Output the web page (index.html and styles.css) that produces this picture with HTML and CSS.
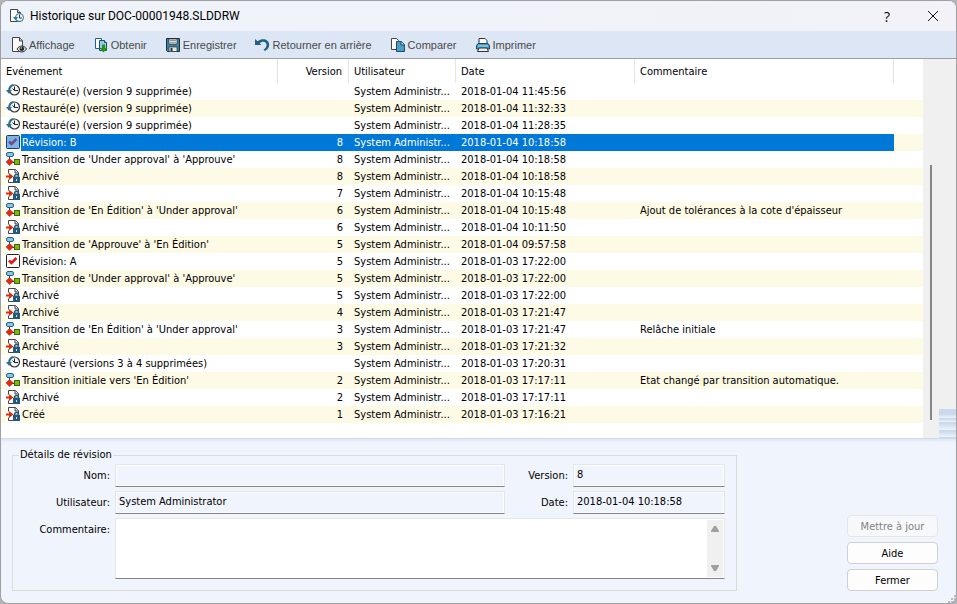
FILE: index.html
```html
<!DOCTYPE html>
<html lang="fr">
<head>
    <meta charset="UTF-8">
    <meta name="viewport" content="width=device-width, initial-scale=1.0">
    <title>Historique sur DOC-00001948.SLDDRW</title>
    <link rel="stylesheet" href="styles.css">
</head>
<body>

    <!-- shared icons -->
    <svg class="sprite" aria-hidden="true">
        <symbol id="restore" viewBox="0 0 15 16">
            <circle cx="8.500" cy="7" r="5" fill="#f4f8fa" stroke="#333" stroke-width="1.2"/>
            <path d="M8.500 3.500v4H12M8.500 7.500l-2-2" fill="none" stroke="#222"/>
            <path d="M7.500 1.800C4.500 2.500 3 4.500 3 7.500" fill="none" stroke="#2c6f94" stroke-width="1.800"/>
            <path d="M0 7h6l-3 4z" fill="#2c6f94"/>
        </symbol>
        <symbol id="revision" viewBox="0 0 15 16">
            <rect x=".5" y="1.500" width="13" height="13" rx="1" fill="#fff" stroke="#222"/>
            <path d="M3 7.500l2.500 2.500L10.500 5" fill="none" stroke="#e8141f" stroke-width="2.500"/>
        </symbol>
        <symbol id="revision-on" viewBox="0 0 15 16">
            <rect x=".5" y="1.500" width="13" height="13" rx="1" fill="#7cb4e8" stroke="#123f6d"/>
            <path d="M3 7.500l2.500 2.500L10.500 5" fill="none" stroke="#704c86" stroke-width="2.500"/>
        </symbol>
        <symbol id="transition" viewBox="0 0 15 16">
            <path d="M3.500 5v6.500H9" fill="none" stroke="#333"/>
            <rect x=".5" y="1.500" width="7" height="4" rx="1.500" fill="#80c9ef" stroke="#28627c"/>
            <path d="M3.500 7.500L7.500 11 3.500 14.500 0 11z" fill="#e8280e" stroke="#8c2412" stroke-width=".5"/>
            <rect x="8.500" y="8.500" width="5" height="5" fill="#7dbb00" stroke="#3e6510"/>
        </symbol>
        <symbol id="archive" viewBox="0 0 15 16">
            <path d="M2.500 5.500v-4h7l3 3V9H8v5.500H2.500v-3" fill="#fff" stroke="#444"/>
            <path d="M9 1.500V5h3.500" fill="#ddd" stroke="#444"/>
            <path d="M0 7.500h3V5l4.500 3.500L3 12V9.500H0z" fill="#e02b08"/>
            <path d="M8.500 10V8.500a2 2 0 0 1 4 0V10" fill="none" stroke="#235a7c" stroke-width="1.500"/>
            <rect x="7" y="9" width="7" height="6" fill="#235a7c"/>
            <path d="M10.500 11v2" stroke="#cfe0ea"/>
        </symbol>
    </svg>

    <div class="window">
        <header class="titlebar">
            <svg class="icon" viewBox="0 0 16 16">
                <path d="M1.500 1.500h7l3 3v9h-10z" fill="#fff" stroke="#444"/>
                <path d="M8.500 1.500v3h3" fill="#ddd" stroke="#444"/>
                <circle cx="10.500" cy="9.500" r="4" fill="#eef5f9" stroke="#2f7398"/>
                <path d="M10.500 6.500v3.500H13" fill="none" stroke="#333"/>
                <path d="M4 9h5l-2.500 3.500z" fill="#247ba8"/>
            </svg>
            <h1>Historique sur DOC-00001948.SLDDRW</h1>
            <button class="caption" aria-label="Aide">?</button>
            <button class="caption" aria-label="Fermer">
                <svg class="close" viewBox="0 0 12 12"><path d="M1 1l10 10M11 1L1 11" stroke="#111"/></svg>
            </button>
        </header>

        <nav class="toolbar">
            <button>
                <svg class="icon" viewBox="0 0 16 16">
                    <path d="M1.500.5h7l3 3v11h-10z" fill="#fafafa" stroke="#444"/>
                    <path d="M8.500.5V4h3" fill="#ccc" stroke="#444"/>
                    <path d="M6 12c2.500-4 7-4 9.500 0-2.500 4-7 4-9.500 0z" fill="#ddd" stroke="#333"/>
                    <circle cx="10.800" cy="11.700" r="2.300" fill="#222"/>
                    <circle cx="10.300" cy="11" r=".8" fill="#ddd"/>
                </svg>
                Affichage
            </button>
            <button>
                <svg class="icon" viewBox="0 0 16 16">
                    <path d="M2.500 1.500h6v10h-6z" fill="#fff" stroke="#245f7d"/>
                    <path d="M6.500 3.500h5l2 2v8h-7z" fill="#93cae4" stroke="#174f6d"/>
                    <path d="M11.500 3.500v2h2" fill="#fff" stroke="#174f6d"/>
                    <path d="M9 7.500h3V11h2.500l-4 4.500-4-4.500H9z" fill="#269318"/>
                </svg>
                Obtenir
            </button>
            <button>
                <svg class="icon" viewBox="0 0 16 16">
                    <path d="M1.500 1.500h13v13h-12l-1-1z" fill="#397f9f" stroke="#17303d"/>
                    <path d="M4 2h8v5H4z" fill="#f2f2f2" stroke="#333" stroke-width=".7"/>
                    <path d="M5 3.500h6M5 5.300h6" stroke="#777" stroke-width=".8"/>
                    <path d="M4 10h8v4.500H4z" fill="#e7e7e7" stroke="#333" stroke-width=".7"/>
                    <path d="M5.500 11h2v3h-2z" fill="#333"/>
                </svg>
                Enregistrer
            </button>
            <button>
                <svg class="icon" viewBox="0 0 16 16">
                    <path d="M0 2v6h6.500L4.600 6.200C7 3.800 11.500 4 11.500 8c0 2-1.200 3.600-3 4.800l1.500 1.200c2.500-1.300 4.200-3.500 4.200-6.200C14.200 2 7 .5 2.600 4.200z" fill="#235e83"/>
                </svg>
                Retourner en arrière
            </button>
            <button>
                <svg class="icon" viewBox="0 0 16 16">
                    <path d="M1.500 1.500h5l2 2v9h-7z" fill="#fff" stroke="#444"/>
                    <path d="M6.500 4.500h5l3 3v7h-8z" fill="#4f9fc5" stroke="#174f6d"/>
                    <path d="M11 4.500V8h3.500" fill="#b8dceb" stroke="#174f6d"/>
                </svg>
                Comparer
            </button>
            <button>
                <svg class="icon" viewBox="0 0 16 16">
                    <path d="M4 7V1.500h6l2 2V7" fill="#fff" stroke="#333"/>
                    <path d="M3 6.500h10l1.500 2V12h-13V8.500z" fill="#419ac0" stroke="#174b64"/>
                    <path d="M3 9h10" stroke="#b9e4f4"/>
                    <path d="M4 11h8l1.500 3.500h-11z" fill="#eee" stroke="#333"/>
                </svg>
                Imprimer
            </button>
        </nav>

        <main class="history">
            <div class="list">
                <table>
                    <colgroup>
                        <col class="col-event">
                        <col class="col-version">
                        <col class="col-user">
                        <col class="col-date">
                        <col class="col-comment">
                        <col>
                    </colgroup>
                    <thead>
                        <tr><th>Evénement</th><th class="num">Version</th><th>Utilisateur</th><th>Date</th><th>Commentaire</th><td></td></tr>
                    </thead>
                    <tbody id="rows"></tbody>
                </table>
            </div>
            <div class="gutter">
                <div class="thumb"></div>
                <div class="lines"></div>
            </div>
        </main>

        <footer class="details">
            <fieldset>
                <legend>Détails de révision</legend>
                <div class="form">
                    <label for="nom">Nom:</label>
                    <input type="text" id="nom" readonly>
                    <label for="version">Version:</label>
                    <input type="text" id="version" value="8" readonly>
                    <label for="user">Utilisateur:</label>
                    <input type="text" id="user" value="System Administrator" readonly>
                    <label for="date">Date:</label>
                    <input type="text" id="date" value="2018-01-04 10:18:58" readonly>
                    <label for="comment" class="top">Commentaire:</label>
                    <div class="comment">
                        <textarea id="comment"></textarea>
                        <div class="scroll">
                            <svg viewBox="0 0 10 8"><path d="M1 7h8v-1L6 1H4L1 6z" fill="#a0a0a0"/></svg>
                            <svg viewBox="0 0 10 8"><path d="M1 1h8v1L6 7H4L1 2z" fill="#a0a0a0"/></svg>
                        </div>
                    </div>
                </div>
            </fieldset>
            <div class="buttons">
                <button disabled>Mettre à jour</button>
                <button>Aide</button>
                <button>Fermer</button>
            </div>
            <svg class="grip" viewBox="0 0 8 8"><path d="M6 0h2v2H6zM3 3h2v2H3zM6 3h2v2H6zM0 6h2v2H0zM3 6h2v2H3zM6 6h2v2H6z" fill="#b4b8c0"/></svg>
        </footer>
    </div>

    <script>
        // icon, event, version, date, comment
        const history = [
            ["restore", "Restauré(e) (version 9 supprimée)", "", "2018-01-04 11:45:56", ""],
            ["restore", "Restauré(e) (version 9 supprimée)", "", "2018-01-04 11:32:33", ""],
            ["restore", "Restauré(e) (version 9 supprimée)", "", "2018-01-04 11:28:35", ""],
            ["revision-on", "Révision: B", "8", "2018-01-04 10:18:58", ""],
            ["transition", "Transition de 'Under approval' à 'Approuve'", "8", "2018-01-04 10:18:58", ""],
            ["archive", "Archivé", "8", "2018-01-04 10:18:58", ""],
            ["archive", "Archivé", "7", "2018-01-04 10:15:48", ""],
            ["transition", "Transition de 'En Édition' à 'Under approval'", "6", "2018-01-04 10:15:48", "Ajout de tolérances à la cote d'épaisseur"],
            ["archive", "Archivé", "6", "2018-01-04 10:11:50", ""],
            ["transition", "Transition de 'Approuve' à 'En Édition'", "5", "2018-01-04 09:57:58", ""],
            ["revision", "Révision: A", "5", "2018-01-03 17:22:00", ""],
            ["transition", "Transition de 'Under approval' à 'Approuve'", "5", "2018-01-03 17:22:00", ""],
            ["archive", "Archivé", "5", "2018-01-03 17:22:00", ""],
            ["archive", "Archivé", "4", "2018-01-03 17:21:47", ""],
            ["transition", "Transition de 'En Édition' à 'Under approval'", "3", "2018-01-03 17:21:47", "Relâche initiale"],
            ["archive", "Archivé", "3", "2018-01-03 17:21:32", ""],
            ["restore", "Restauré (versions 3 à 4 supprimées)", "", "2018-01-03 17:20:31", ""],
            ["transition", "Transition initiale vers 'En Édition'", "2", "2018-01-03 17:17:11", "Etat changé par transition automatique."],
            ["archive", "Archivé", "2", "2018-01-03 17:17:11", ""],
            ["archive", "Créé", "1", "2018-01-03 17:16:21", ""]
        ];

        document.getElementById("rows").innerHTML = history.map(([icon, event, version, date, comment]) => `
            <tr class="${icon === "revision-on" ? "selected" : ""}">
                <td class="event"><div><svg class="row-icon"><use href="#${icon}"/></svg><span>${event}</span></div></td>
                <td class="num">${version}</td>
                <td>System Administr...</td>
                <td>${date}</td>
                <td>${comment}</td>
                <td></td>
            </tr>`).join("");
    </script>

</body>
</html>
```
FILE: styles.css
```css
* {
    box-sizing: border-box;
}

body {
    margin: 0;
    background: #b4b4b4;
    color: #000;
    font: 11px/17px Tahoma, "DejaVu Sans Condensed", sans-serif;
}

button, input, textarea {
    font: inherit;
    color: inherit;
}

.sprite {
    display: none;
}

.window {
    display: flex;
    flex-direction: column;
    min-height: 100vh;
    border: 1px solid #a0a0a0;
    border-radius: 8px;
    background: #f0f4fc;
    overflow: hidden;
}

.icon {
    width: 16px;
    height: 16px;
}

/* title bar */
.titlebar {
    display: flex;
    align-items: center;
    height: 30px;
    padding-left: 8px;
    background: linear-gradient(90deg, #eef3fa, #f2f2f8);
}

.titlebar h1 {
    flex: 1;
    margin: 0 0 0 5px;
    font: 12px/16px "Segoe UI", Roboto, sans-serif;
}

.caption {
    display: flex;
    align-items: center;
    justify-content: center;
    width: 46px;
    height: 28px;
    padding: 0;
    border: 0;
    background: none;
    font: 14px "Segoe UI", "Open Sans", sans-serif;
}

.close {
    width: 12px;
    height: 12px;
}

/* toolbar */
.toolbar {
    display: flex;
    gap: 18px;
    height: 28px;
    padding-left: 10px;
    background: #dce6f4;
    border-bottom: 1px solid #a0a0a0;
}

.toolbar button {
    display: flex;
    align-items: center;
    gap: 2px;
    padding: 0;
    border: 0;
    background: none;
    color: #4a4a4a;
    font: 11px "Liberation Sans", sans-serif;
    white-space: nowrap;
}

/* history list */
.history {
    display: flex;
    flex: 1;
    background: #fff;
}

.list {
    flex: 1;
    padding-bottom: 15px;
}

table {
    width: 100%;
    table-layout: fixed;
    border-collapse: separate;
    border-spacing: 0;
}

.col-event { width: 277px; }
.col-version { width: 71px; }
.col-user { width: 107px; }
.col-date { width: 179px; }
.col-comment { width: 259px; }

th, td {
    padding: 0 5px;
    font-weight: normal;
    text-align: left;
    white-space: nowrap;
}

th {
    height: 24px;
    border-right: 1px solid #e5e5e5;
}

td {
    height: 17px;
}

.num {
    padding-right: 6px;
    text-align: right;
}

tbody tr:nth-child(even) {
    background: #fdfae6;
}

.event div {
    display: flex;
    height: 17px;
}

td.event {
    padding-right: 0;
}

.event span {
    flex: 1;
    padding-left: 1px;
}

.row-icon {
    width: 15px;
    height: 16px;
    background: #fff;
}

.selected .event span,
.selected td:not(.event):not(:last-child) {
    background: #0078d7;
    color: #fff;
}

.gutter {
    display: flex;
    justify-content: space-between;
    width: 33px;
    padding-left: 7px;
    background: #f0f0f0;
}

.thumb {
    width: 2px;
    margin: 106px 0 18px;
    background: #858585;
}

.lines {
    align-self: flex-end;
    width: 17px;
    height: 29px;
    background: linear-gradient(#c9d9ec 0 5px, #eef3fb 9px, #c9d9ec 9px 10px, #eef3fb 13px, #c9d9ec 13px 14px, #eef3fb 21px, #c9d9ec 21px 22px, #eef3fb 28px, #c9d9ec 28px);
}

/* revision details */
.details {
    position: relative;
    display: flex;
    justify-content: space-between;
    padding: 9px 18px 12px 11px;
    border-top: 1px solid #ccdaed;
    box-shadow: inset 0 2px 2px #dfe8f5;
}

fieldset {
    flex: 1;
    min-width: 0;
    margin: 0 110px 0 0;
    padding: 2px 11px 11px 0;
    border: 1px solid #dcdcdc;
}

legend {
    margin-left: 6px;
    padding: 0 1px;
    line-height: 14px;
}

.form {
    display: grid;
    grid-template-columns: 97px 1fr 58px 152px;
    grid-template-rows: 23px 23px 61px;
    gap: 4px 5px;
}

.form label {
    align-self: center;
    text-align: right;
}

.form label.top {
    align-self: start;
    padding-top: 3px;
}

.form input {
    width: 100%;
    min-width: 0;
    padding: 0 3px 3px;
    border: 1px solid #e6e6e6;
    border-bottom-color: #858585;
    background: #f0f4fc;
    box-shadow: inset 0 0 0 1px #fafcff;
}

.comment {
    display: flex;
    grid-column: 2 / -1;
    padding: 1px;
    border: 1px solid #e6e6e6;
    border-bottom-color: #858585;
    background: #fff;
}

textarea {
    flex: 1;
    padding: 2px;
    border: 0;
    resize: none;
    outline: none;
}

.scroll {
    display: flex;
    flex-direction: column;
    justify-content: space-between;
    align-items: center;
    width: 16px;
    padding: 5px 0;
    background: #f0f0f0;
}

.scroll svg {
    width: 10px;
    height: 8px;
}

.buttons {
    display: flex;
    flex-direction: column;
    justify-content: flex-end;
    gap: 5px;
}

.buttons button {
    width: 91px;
    height: 22px;
    padding: 0;
    border: 1px solid #d0d0d0;
    border-radius: 4px;
    background: #fdfdfd;
}

.buttons button:disabled {
    border-color: #e6e6e8;
    background: #f7f8fb;
    color: #838383;
}

.grip {
    position: absolute;
    right: 0;
    bottom: 0;
    width: 8px;
    height: 8px;
}
```
